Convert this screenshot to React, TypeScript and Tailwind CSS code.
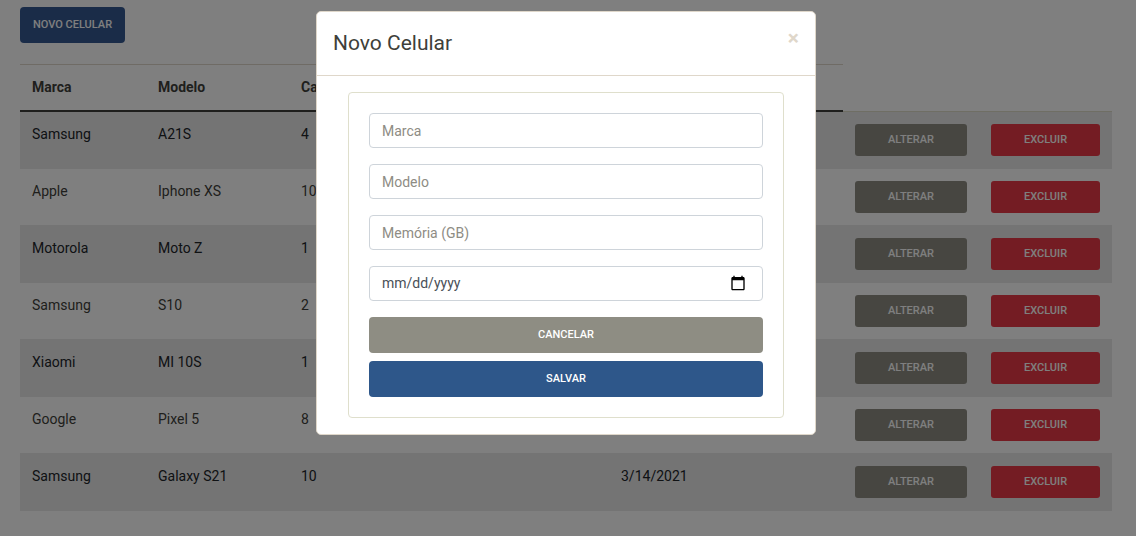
import type { ReactNode } from "react";

type Phone = { brand: string; model: string; memory: string; date: string };

const phones: Phone[] = [
  { brand: "Samsung", model: "A21S", memory: "4", date: "" },
  { brand: "Apple", model: "Iphone XS", memory: "10", date: "" },
  { brand: "Motorola", model: "Moto Z", memory: "1", date: "" },
  { brand: "Samsung", model: "S10", memory: "2", date: "" },
  { brand: "Xiaomi", model: "MI 10S", memory: "1", date: "" },
  { brand: "Google", model: "Pixel 5", memory: "8", date: "" },
  { brand: "Samsung", model: "Galaxy S21", memory: "10", date: "3/14/2021" },
];

function Row({ phone, odd }: { phone: Phone; odd: boolean }) {
  return (
    <div
      className={
        odd
          ? "grid h-[58px] grid-cols-[126px_143px_320px_234px_136px_133px] border-t border-[#dfdcc8] bg-[#e8e8e8] text-[#212529] not-first:border-[#e8e8e8]"
          : "grid h-14 grid-cols-[126px_143px_320px_234px_136px_133px] text-[#3e3f3a]"
      }
    >
      <div className="px-3 pt-3">{phone.brand}</div>
      <div className="px-3 pt-3">{phone.model}</div>
      <div className="px-3 pt-3">{phone.memory}</div>
      <div className="px-3 pt-3">{phone.date}</div>
      <div className="px-3 pt-3">
        <button className="block h-8 w-full rounded-[3px] bg-[#8e8d83] pb-0.5 text-[11px] font-medium text-white">ALTERAR</button>
      </div>
      <div className="px-3 pt-3">
        <button className="block h-8 w-full rounded-[3px] bg-[#e83946] pb-0.5 text-[11px] font-medium text-white">EXCLUIR</button>
      </div>
    </div>
  );
}

function Field({ children }: { children: ReactNode }) {
  return (
    <div className="mb-4 flex h-[35px] items-start justify-between rounded border border-[#ced4da] bg-white px-3 pt-[7px] text-[#8e8c84]">
      {children}
    </div>
  );
}

export default function App() {
  return (
    <div className="relative h-[536px] w-[1136px] overflow-hidden bg-white font-['Roboto',sans-serif] text-sm leading-[21px] text-[#3e3f3a]">
      <div className="px-5 pt-[7px]">
        <button className="block h-9 w-[105px] rounded bg-[#345990] pb-0.5 text-[11px] font-medium text-white">NOVO CELULAR</button>
        <div className="mt-[21px] grid h-[47px] w-[823px] grid-cols-[126px_143px_320px_234px] border-t border-b border-t-[#dfd7ca] border-b-[#3e3f3a] font-bold">
          <div className="px-3 pt-3">Marca</div>
          <div className="px-3 pt-3">Modelo</div>
          <div className="px-3 pt-3">Capacidade</div>
          <div className="px-3 pt-3">Data</div>
        </div>
        <div className="w-[1092px]">
          {phones.map((phone, i) => (
            <Row key={i} phone={phone} odd={i % 2 === 0} />
          ))}
        </div>
      </div>
      <div className="absolute top-[111px] left-5 h-px w-[823px] bg-[#3e3f3a]" />

      <div className="absolute inset-0 flex items-start justify-center bg-black/50 pt-[11px] pr-1">
        <div className="h-[424px] w-[500px] rounded-[5px] border border-[#dfd7ca] bg-white">
          <div className="flex h-16 items-start justify-between border-b border-[#dfd7ca] px-4 pt-4">
            <h5 className="text-[21px] leading-[31px]">Novo Celular</h5>
            <button className="text-[21px] leading-[21px] font-bold text-[#dfd7ca]">×</button>
          </div>
          <div className="mx-[31px] mt-4 h-[326px] rounded border border-[#dfdfcc] p-5">
            <Field>Marca</Field>
            <Field>Modelo</Field>
            <Field>Memória (GB)</Field>
            <Field>
              <span className="-mt-px text-[#495057]">mm/dd/yyyy</span>
              <svg className="mt-px mr-1 h-4 w-4 text-black" viewBox="0 0 24 24" fill="currentColor">
                <path d="M20 3h-1V1h-2v2H7V1H5v2H4c-1.1 0-2 .9-2 2v16c0 1.1.9 2 2 2h16c1.1 0 2-.9 2-2V5c0-1.1-.9-2-2-2zm0 18H4V8h16v13z" />
              </svg>
            </Field>
            <button className="block h-9 w-full rounded bg-[#8e8d83] pb-0.5 text-[11px] font-medium text-white">CANCELAR</button>
            <button className="mt-2 block h-9 w-full rounded bg-[#2e578a] pb-0.5 text-[11px] font-medium text-white">SALVAR</button>
          </div>
        </div>
      </div>
    </div>
  );
}
